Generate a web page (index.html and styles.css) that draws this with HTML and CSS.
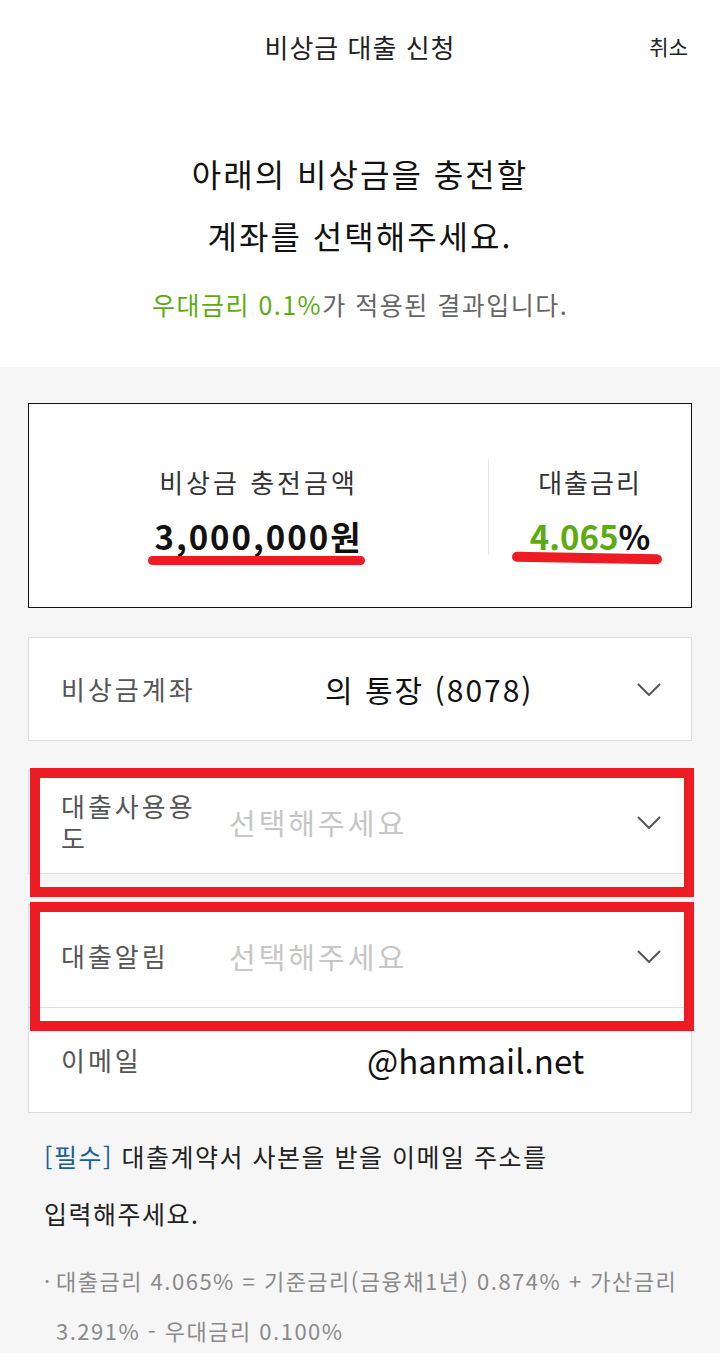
FILE: index.html
```html
<!DOCTYPE html>
<html lang="ko">
  <head>
    <meta charset="UTF-8" />
    <meta name="viewport" content="width=device-width, initial-scale=1.0" />
    <title>비상금 대출 신청</title>
    <link rel="stylesheet" href="styles.css">
  </head>
  <body>
    <header class="topbar">
      <span></span>
      <h1 class="topbar-title">비상금 대출 신청</h1>
      <button type="button" class="topbar-cancel">취소</button>
    </header>

    <section class="intro">
      <p class="intro-head">아래의 비상금을 충전할<br />계좌를 선택해주세요.</p>
      <p class="intro-sub"><span class="green">우대금리 0.1%</span>가 적용된 결과입니다.</p>
    </section>

    <main class="content">
      <div class="summary">
        <div class="summary-col">
          <div class="summary-label">비상금 충전금액</div>
          <div class="summary-value">
            3,000,000원
            <span class="mark mark-amount"></span>
          </div>
        </div>
        <div class="summary-col summary-col--rate">
          <div class="summary-label">대출금리</div>
          <div class="summary-value">
            <span class="green">4.065</span>%
            <span class="mark mark-rate"></span>
          </div>
        </div>
      </div>

      <div class="field field--first">
        <div class="field-label">비상금계좌</div>
        <div class="field-value field-value--account">의 통장 (8078)</div>
        <svg class="chevron" width="24" height="13" viewBox="0 0 24 13">
          <path d="M1 1 L12 12 L23 1" fill="none" stroke="#555" stroke-width="2" />
        </svg>
      </div>

      <div class="field field--marked">
        <div class="field-label">대출사용용도</div>
        <div class="field-value placeholder">선택해주세요</div>
        <svg class="chevron" width="24" height="13" viewBox="0 0 24 13">
          <path d="M1 1 L12 12 L23 1" fill="none" stroke="#555" stroke-width="2" />
        </svg>
      </div>

      <div class="field field--marked field--gap">
        <div class="field-label">대출알림</div>
        <div class="field-value placeholder">선택해주세요</div>
        <svg class="chevron" width="24" height="13" viewBox="0 0 24 13">
          <path d="M1 1 L12 12 L23 1" fill="none" stroke="#555" stroke-width="2" />
        </svg>
      </div>
      <div class="field field--joined">
        <div class="field-label">이메일</div>
        <div class="field-value field-value--email">@hanmail.net</div>
      </div>

      <p class="help"><span class="blue">[필수]</span> 대출계약서 사본을 받을 이메일 주소를<br />입력해주세요.</p>

      <ul class="notes">
        <li>대출금리 4.065% = 기준금리(금융채1년) 0.874% + 가산금리<br />3.291% - 우대금리 0.100%</li>
      </ul>
    </main>
  </body>
</html>
```

FILE: styles.css
```css
body {
  margin: 0;
  font-family: "Noto Sans CJK KR", "Noto Sans", sans-serif;
  color: #222;
  background-color: #f6f6f6;
}

.green {
  color: #5cab14;
}

.blue {
  color: #1d5f95;
}

/* top bar */
.topbar {
  display: grid;
  grid-template-columns: 1fr auto 1fr;
  align-items: center;
  height: 92px;
  background-color: #fff;
}

.topbar-title {
  margin: 0;
  font-size: 26px;
  font-weight: normal;
  letter-spacing: 1px;
}

.topbar-cancel {
  justify-self: end;
  margin-right: 32px;
  padding: 0;
  border: none;
  background: none;
  font-family: inherit;
  font-size: 21px;
  color: #222;
}

/* intro */
.intro {
  background-color: #fff;
  text-align: center;
  padding: 50px 0 1px;
  height: 275px;
  box-sizing: border-box;
}

.intro-head {
  margin: 0;
  font-size: 32px;
  line-height: 62px;
  letter-spacing: 2px;
  color: #111;
}

.intro-sub {
  margin: 20px 0 0;
  font-size: 25px;
  line-height: 36px;
  letter-spacing: 1.5px;
  color: #666;
}

/* content */
.content {
  padding: 36px 28px 20px;
}

.summary {
  display: flex;
  align-items: center;
  height: 205px;
  padding-top: 3px;
  box-sizing: border-box;
  border: 1px solid #111;
  background-color: #fff;
}

.summary-col {
  flex: 1;
  height: 96px;
  text-align: center;
}

.summary-col--rate {
  flex: 0 0 202px;
  border-left: 1px solid #e6e6e6;
}

.summary-label {
  margin-top: 5px;
  font-size: 26px;
  line-height: 36px;
  letter-spacing: 3px;
  color: #333;
}

.summary-col--rate .summary-label {
  letter-spacing: 2px;
}

.summary-value {
  position: relative;
  display: inline-block;
  margin-top: 14px;
  font-size: 33px;
  font-weight: bold;
  line-height: 44px;
  letter-spacing: 2px;
  color: #111;
}

.summary-col--rate .summary-value {
  font-weight: 600;
  letter-spacing: 0;
}

/* red marker strokes drawn over the figures */
.mark {
  position: absolute;
  top: 42px;
  height: 9px;
  border-radius: 5px;
  background-color: #ed1c24;
}

.mark-amount {
  left: -6px;
  right: -2px;
}

.mark-rate {
  left: -18px;
  right: -12px;
  top: 39px;
  height: 10px;
  transform: rotate(1deg);
}

/* form rows */
.field {
  position: relative;
  display: flex;
  align-items: center;
  height: 104px;
  margin-top: 29px;
  padding: 0 30px 0 32px;
  box-sizing: border-box;
  border: 1px solid #dedede;
  background-color: #fff;
}

.field--gap {
  margin-top: 30px;
}

.field--joined {
  margin-top: 0;
  height: 105px;
  border-top: none;
}

.field-label {
  width: 150px;
  flex-shrink: 0;
  font-size: 26px;
  line-height: 32px;
  letter-spacing: 3px;
  color: #555;
}

.field-value {
  margin-left: 18px;
  font-size: 30px;
  color: #111;
}

.field-value--account {
  padding-left: 96px;
  letter-spacing: 2px;
}

.field-value--email {
  padding-left: 138px;
  font-size: 33px;
}

.placeholder {
  font-size: 29px;
  letter-spacing: 3px;
  color: #c6c6c6;
}

.chevron {
  margin-left: auto;
}

/* annotation frames */
.field--marked::after {
  content: "";
  position: absolute;
  z-index: 2;
  top: -3px;
  left: 1px;
  right: -3px;
  bottom: -24px;
  border: 10px solid #ed1c24;
}

/* notes */
.help {
  margin: 15px 0 0;
  padding: 0 0 0 16px;
  font-size: 25px;
  line-height: 57px;
  letter-spacing: 1.5px;
  color: #222;
}

.notes {
  margin: 13px 0 0;
  padding: 0 0 0 16px;
  list-style: none;
  font-size: 22px;
  line-height: 50px;
  letter-spacing: 1.5px;
  color: #8a8a8a;
}

.notes li {
  padding-left: 12px;
  text-indent: -12px;
}

.notes li::before {
  content: "·";
  display: inline-block;
  width: 12px;
  text-indent: 0;
}
```
